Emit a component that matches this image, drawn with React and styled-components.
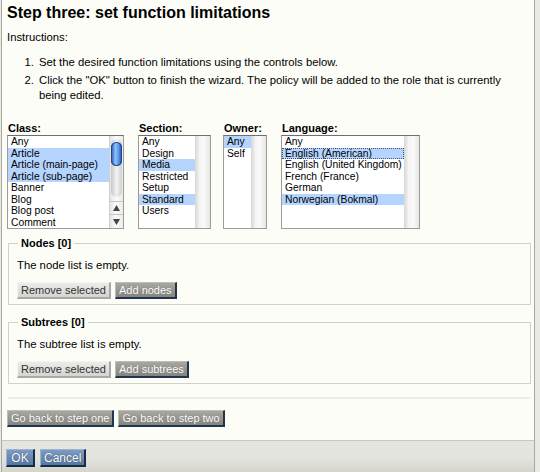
import React from 'react';
import styled, { createGlobalStyle } from 'styled-components';

const GlobalStyle = createGlobalStyle`
  html, body {
    margin: 0;
    padding: 0;
    background: #e9e9e4;
  }
  body {
    font-family: "Liberation Sans", Arial, sans-serif;
    color: #000;
  }
`;

const Window = styled.div`
  width: 534px;
  height: 472px;
  margin-left: 1px;
  border-left: 1px solid #a9a9a2;
  border-right: 1px solid #a9a9a2;
  background: #fdfdf8;
  display: flex;
  flex-direction: column;
  box-sizing: border-box;
  overflow: hidden;
`;

const Content = styled.div`
  flex: 1;
  padding: 0 3px 0 5px;
`;

const Title = styled.h2`
  font-size: 16px;
  font-weight: bold;
  margin: 3px 0 0 0;
  line-height: 20px;
`;

const Para = styled.p`
  font-size: 11.3px;
  margin: 7px 0 0 0;
  line-height: 14px;
`;

const Steps = styled.ol`
  font-size: 11.3px;
  line-height: 15px;
  margin: 11px 0 0 0;
  padding-left: 30px;
  li {
    padding-left: 2px;
    margin-top: 3px;
  }
  li:first-child {
    margin-top: 0;
  }
`;

const Selectors = styled.div`
  display: flex;
  margin-top: 19px;
  align-items: flex-start;
`;

const Field = styled.div`
  margin-right: ${p => p.$gap}px;
`;

const Label = styled.div`
  font-size: 11px;
  font-weight: bold;
  line-height: 13px;
  padding-left: 1px;
`;

const Box = styled.div`
  display: flex;
  width: ${p => p.$width}px;
  height: 94px;
  border: 1px solid #9b9b9b;
  border-top-color: #6f6f6f;
  background: #fff;
  box-sizing: border-box;
  overflow: hidden;
`;

const Options = styled.div`
  flex: 1;
  min-width: 0;
`;

const Option = styled.div`
  font-size: 10.3px;
  line-height: 11.5px;
  padding-left: 3px;
  white-space: nowrap;
  background: ${p => (p.$selected ? '#b5d5ff' : 'transparent')};
  outline: ${p => (p.$focus ? '1px dotted #3a4f7a' : 'none')};
  outline-offset: -1px;
`;

const Track = styled.div`
  width: ${p => p.$width}px;
  background: linear-gradient(to right, #d6d6d6, #f4f4f4 30%, #fafafa 60%, #e6e6e6);
`;

const Scroll = styled.div`
  width: 14px;
  display: flex;
  flex-direction: column;
  align-items: center;
  background: linear-gradient(to right, #e4e4e4, #fbfbfb 45%, #ececec);
  border-left: 1px solid #cfcfcf;
  box-sizing: border-box;
`;

const Groove = styled.div`
  width: 11px;
  height: 59px;
  margin-top: 3px;
  border-radius: 6px;
  background: linear-gradient(to right, #c8c8c8, #f2f2f2 50%, #d0d0d0);
  position: relative;
`;

const Thumb = styled.div`
  position: absolute;
  left: 0;
  top: 3px;
  width: 11px;
  height: 24px;
  border-radius: 6px;
  background: linear-gradient(to right, #1c4fb5, #8ec0f8 40%, #5b95e8 70%, #1a47a8);
  box-shadow: inset 0 0 0 1px #20468f;
`;

const Arrow = styled.div`
  width: 13px;
  height: 14px;
  display: flex;
  align-items: center;
  justify-content: center;
  border-top: 1px solid #c4c4c4;
  box-sizing: border-box;
  margin-top: ${p => p.$top || 0}px;
`;

const Fieldset = styled.fieldset`
  margin: ${p => p.$top}px 0 0 1px;
  padding: 0 8px 5px 8px;
  border: 1px solid #d2d2cc;
  legend {
    font-size: 11px;
    font-weight: bold;
    padding: 0 3px;
    margin-left: 1px;
  }
`;

const Note = styled.p`
  font-size: 11.3px;
  margin: 10px 0 10px 0;
  line-height: 13px;
`;

const ButtonRow = styled.div`
  display: flex;
  gap: 4px;
`;

const Button = styled.button`
  font-family: "Liberation Sans", Arial, sans-serif;
  font-size: ${p => p.$size || 11}px;
  height: ${p => p.$h || 17}px;
  min-width: ${p => p.$min || 0}px;
  padding: 0 ${p => p.$pad || 3}px;
  box-sizing: border-box;
  line-height: 1;
  cursor: pointer;
  border-style: solid;
  border-width: 1px 2px 2px 1px;
  ${p =>
    p.$kind === 'light' &&
    `
    color: #333;
    background: linear-gradient(#ececea, #d4d4d0);
    border-color: #f4f4f2 #a8a8a4 #a8a8a4 #f4f4f2;
  `}
  ${p =>
    p.$kind === 'gray' &&
    `
    color: #fff;
    text-shadow: 0 0 1px #666;
    background: linear-gradient(#a8a8a0, #85857d);
    border-color: #bdbdb6 #1e3650 #1e3650 #bdbdb6;
  `}
  ${p =>
    p.$kind === 'blue' &&
    `
    color: #fff;
    text-shadow: 0 0 1px #234;
    background: linear-gradient(#7c9cc4, #5678a4);
    border-color: #9cb4d2 #172c46 #172c46 #9cb4d2;
  `}
`;

const Rule = styled.div`
  height: 2px;
  background: #ecece6;
  margin: 13px 1px 0 1px;
`;

const BackRow = styled(ButtonRow)`
  margin-top: 11px;
`;

const Footer = styled.div`
  flex: none;
  height: 32px;
  border-top: 1px solid #c9c9c2;
  background: linear-gradient(#e6e6e1 0%, #e4e4df 55%, #d4d4cc 100%);
  display: flex;
  align-items: flex-start;
  gap: 5px;
  padding: 8px 0 0 4px;
  box-sizing: border-box;
`;

const Tri = ({ down }) => (
  <svg width="7" height="6" viewBox="0 0 7 6">
    <path d={down ? 'M0 0 L7 0 L3.5 6 Z' : 'M0 6 L7 6 L3.5 0 Z'} fill="#444" />
  </svg>
);

const ListBox = ({ width, items, track, scroll }) => (
  <Box $width={width}>
    <Options>
      {items.map(it => (
        <Option key={it.t} $selected={it.s} $focus={it.f}>
          {it.t}
        </Option>
      ))}
    </Options>
    {scroll ? (
      <Scroll>
        <Groove>
          <Thumb />
        </Groove>
        <Arrow $top={4}>
          <Tri />
        </Arrow>
        <Arrow>
          <Tri down />
        </Arrow>
      </Scroll>
    ) : (
      <Track $width={track} />
    )}
  </Box>
);

const classes = [
  { t: 'Any' },
  { t: 'Article', s: true },
  { t: 'Article (main-page)', s: true },
  { t: 'Article (sub-page)', s: true },
  { t: 'Banner' },
  { t: 'Blog' },
  { t: 'Blog post' },
  { t: 'Comment' },
];

const sections = [
  { t: 'Any' },
  { t: 'Design' },
  { t: 'Media', s: true },
  { t: 'Restricted' },
  { t: 'Setup' },
  { t: 'Standard', s: true },
  { t: 'Users' },
];

const owners = [{ t: 'Any', s: true }, { t: 'Self' }];

const languages = [
  { t: 'Any' },
  { t: 'English (American)', s: true, f: true },
  { t: 'English (United Kingdom)' },
  { t: 'French (France)' },
  { t: 'German' },
  { t: 'Norwegian (Bokmal)', s: true },
];

const App = () => {
  return (
    <>
      <GlobalStyle />
      <Window>
        <Content>
          <Title>Step three: set function limitations</Title>
          <Para>Instructions:</Para>
          <Steps>
            <li>Set the desired function limitations using the controls below.</li>
            <li>
              Click the "OK" button to finish the wizard. The policy will be added to the role that is currently
              being edited.
            </li>
          </Steps>

          <Selectors>
            <Field $gap={14}>
              <Label>Class:</Label>
              <ListBox width={117} items={classes} scroll />
            </Field>
            <Field $gap={12}>
              <Label>Section:</Label>
              <ListBox width={73} items={sections} track={15} />
            </Field>
            <Field $gap={14}>
              <Label>Owner:</Label>
              <ListBox width={44} items={owners} track={15} />
            </Field>
            <Field $gap={0}>
              <Label>Language:</Label>
              <ListBox width={139} items={languages} track={15} />
            </Field>
          </Selectors>

          <Fieldset $top={8}>
            <legend>Nodes [0]</legend>
            <Note>The node list is empty.</Note>
            <ButtonRow>
              <Button $kind="light">Remove selected</Button>
              <Button $kind="gray">Add nodes</Button>
            </ButtonRow>
          </Fieldset>

          <Fieldset $top={11}>
            <legend>Subtrees [0]</legend>
            <Note>The subtree list is empty.</Note>
            <ButtonRow>
              <Button $kind="light">Remove selected</Button>
              <Button $kind="gray">Add subtrees</Button>
            </ButtonRow>
          </Fieldset>

          <Rule />
          <BackRow>
            <Button $kind="gray">Go back to step one</Button>
            <Button $kind="gray">Go back to step two</Button>
          </BackRow>
        </Content>
        <Footer>
          <Button $kind="blue" $h={18} $size={12} $min={29}>OK</Button>
          <Button $kind="blue" $h={18} $size={12}>Cancel</Button>
        </Footer>
      </Window>
    </>
  );
};

export default App;
